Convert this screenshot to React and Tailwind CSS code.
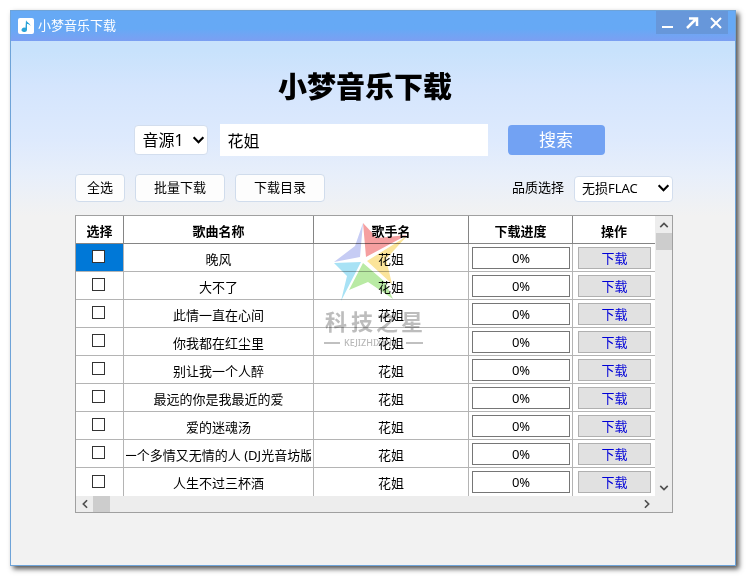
import React, { useState } from 'react';

const songs = [
  '晚风',
  '大不了',
  '此情一直在心间',
  '你我都在红尘里',
  '别让我一个人醉',
  '最远的你是我最近的爱',
  '爱的迷魂汤',
  '一个多情又无情的人 (DJ光音坊版',
  '人生不过三杯酒',
];

const Chevron = ({ className }) => (
  <svg viewBox="0 0 12 12" className={className} fill="none" stroke="currentColor" strokeWidth="2">
    <path d="M1.5 3.5 6 8l4.5-4.5" />
  </svg>
);

const Select = ({ id, label, options, className, selectClass }) => (
  <div className={`relative ${className}`}>
    <select
      id={id}
      aria-label={label}
      className={`h-full w-full appearance-none rounded-sm border border-[#d3deee] bg-white pr-5 text-black ${selectClass}`}
    >
      {options.map((option) => (
        <option key={option}>{option}</option>
      ))}
    </select>
    <Chevron className="pointer-events-none absolute right-[3px] top-1/2 size-[13px] -translate-y-1/2" />
  </div>
);

const ToolButton = ({ children, className }) => (
  <button className={`h-7 rounded-sm border border-[#d0dcec] bg-[#fdfdfd] text-[13px] ${className}`}>
    {children}
  </button>
);

const Watermark = () => (
  <svg
    viewBox="0 0 100 130"
    aria-hidden="true"
    className="pointer-events-none absolute left-[248px] top-1 h-[130px] w-[100px] mix-blend-multiply"
  >
    <path d="M39 3 53 18 83 15 42 37Z" fill="#f59fa0" />
    <path d="M39 3 36 37 10 42 31 26Z" fill="#c6ccf4" />
    <path d="M83 16 62 39 68 64 43 41Z" fill="#fbe49a" />
    <path d="M10 43 37 42 17 81 23 56Z" fill="#a8e2f5" />
    <path d="M39 43 61 62 69 79 44 62 25 70Z" fill="#b9eaa4" />
    <text x="1 27 52 77" y="110" fontSize="22" fontWeight="700" fill="#bdbdbd">
      科技之星
    </text>
    <path d="M0 123h16M82 123h17" stroke="#c0c0c0" strokeWidth="2" />
    <text x="20" y="126" fontSize="9" fontWeight="500" fill="#b8b8b8">
      KEJIZHIXING
    </text>
  </svg>
);

const SongTable = () => {
  const [checked, setChecked] = useState([]);

  const toggle = (song) => {
    setChecked(checked.includes(song) ? checked.filter((s) => s !== song) : [...checked, song]);
  };

  return (
    <div className="mt-[13px] border border-[#a0a0a0] bg-[#ededed]">
      <div className="flex">
        <div className="relative min-w-0 flex-1 bg-white">
          <table className="w-full table-fixed border-separate border-spacing-0 text-center text-[13px] leading-5">
            <colgroup>
              <col className="w-12" />
              <col className="w-[190px]" />
              <col className="w-[155px]" />
              <col className="w-[104px]" />
              <col />
            </colgroup>
            <thead>
              <tr className="h-7">
                {['选择', '歌曲名称', '歌手名', '下载进度', '操作'].map((title) => (
                  <th key={title} className="border-b border-r border-[#858585] p-0 pt-0.5 font-bold last:border-r-0">
                    {title}
                  </th>
                ))}
              </tr>
            </thead>
            <tbody>
              {songs.map((song, i) => (
                <tr key={song} className="group h-7">
                  <td className={`border-b border-r border-[#b4b4b4] p-0 pr-0.5 pb-0.5 group-last:border-b-0 ${i === 0 ? 'bg-[#0078d7]' : ''}`}>
                    <input
                      type="checkbox"
                      aria-label={song}
                      checked={checked.includes(song)}
                      onChange={() => toggle(song)}
                      className="mx-auto block size-[13px] appearance-none border border-[#333] bg-white checked:bg-[#0078d7]"
                    />
                  </td>
                  <td className="border-b border-r border-[#b4b4b4] px-0.5 py-0 group-last:border-b-0">
                    <div className="flex justify-center overflow-hidden whitespace-nowrap pt-0.5">{song}</div>
                  </td>
                  <td className="border-b border-r border-[#b4b4b4] p-0 pt-0.5 group-last:border-b-0">花姐</td>
                  <td className="border-b border-r border-[#b4b4b4] py-0 pl-[3px] pr-0.5 group-last:border-b-0">
                    <div role="progressbar" aria-valuenow={0} aria-label={song} className="h-[22px] border border-[#767676]">
                      0%
                    </div>
                  </td>
                  <td className="border-b border-[#b4b4b4] py-0 pl-[5px] pr-1 group-last:border-b-0">
                    <button className="block h-[22px] w-full border border-[#b0b0b0] bg-[#e1e1e1] text-[#0000d8]">下载</button>
                  </td>
                </tr>
              ))}
            </tbody>
          </table>
          <Watermark />
        </div>

        {/* Vertical scrollbar */}
        <div className="flex w-[17px] flex-col items-center text-[#505050]">
          <button aria-label="向上滚动" className="flex h-[17px] w-full items-center justify-center">
            <Chevron className="size-[10px] rotate-180" />
          </button>
          <div className="h-[17px] w-4 bg-[#cdcdcd]" />
          <button aria-label="向下滚动" className="mt-auto flex h-[17px] w-full items-center justify-center">
            <Chevron className="size-[10px]" />
          </button>
        </div>
      </div>

      {/* Horizontal scrollbar */}
      <div className="flex h-4 items-center pr-[17px] text-[#505050]">
        <button aria-label="向左滚动" className="flex w-[17px] items-center justify-center">
          <Chevron className="size-[10px] rotate-90" />
        </button>
        <div className="h-4 w-[17px] bg-[#cdcdcd]" />
        <button aria-label="向右滚动" className="ml-auto flex w-[17px] items-center justify-center">
          <Chevron className="size-[10px] -rotate-90" />
        </button>
      </div>
    </div>
  );
};

export default function App() {
  const [keyword, setKeyword] = useState('花姐');

  return (
    <div className="flex min-h-screen bg-white p-[10px] pr-[11px] font-['Noto_Sans','Noto_Sans_CJK_SC',sans-serif] text-black">
      <div className="flex flex-1 flex-col border border-[#6ea3d8] bg-[#f2f2f2] bg-[linear-gradient(180deg,#c6e2fc_0px,#c8e2fc_40px,#d4e5fd_75px,#deeafd_130px,#e8effa_165px,#f2f2f2_205px)] shadow-[3px_3px_5px_#555]">
        <header className="flex h-[30px] items-start justify-between bg-linear-to-b from-[#66a9f5] from-60% to-[#7b9ff2]">
          <div className="flex h-[29px] items-center gap-1 pl-[7px] text-[13px] text-white">
            <svg viewBox="0 0 16 16" className="size-4">
              <rect width="16" height="16" rx="2" fill="#fff" />
              <path d="M8 2c.5 2.500 4 2.500 4.500 6-1-1.500-2-2-3.500-2v6a2.700 2.200 0 1 1-1.500-2.200Z" fill="#2ba3d8" />
            </svg>
            小梦音乐下载
          </div>
          <div className="mr-[7px] flex h-[23px] w-[72px] items-center justify-around bg-[#6797da] text-white">
            <button aria-label="最小化">
              <svg viewBox="0 0 14 14" className="size-[14px]" stroke="currentColor" strokeWidth="2">
                <path d="M1 11h11" />
              </svg>
            </button>
            <button aria-label="最大化">
              <svg viewBox="0 0 14 14" className="size-[14px]" fill="none" stroke="currentColor" strokeWidth="2.5">
                <path d="M2 12 11 3M4 2.5h8V10" />
              </svg>
            </button>
            <button aria-label="关闭">
              <svg viewBox="0 0 14 14" className="size-[14px]" fill="none" stroke="currentColor" strokeWidth="2">
                <path d="m2 2 10 10M12 2 2 12" />
              </svg>
            </button>
          </div>
        </header>

        <main className="flex flex-col pl-16 pr-[62px]">
          <h1 className="mt-6 pr-[18px] text-center text-[29px] font-extrabold leading-[44px]">小梦音乐下载</h1>

          <form className="mt-[15px] flex items-center justify-center pr-[10px]" onSubmit={(e) => e.preventDefault()}>
            <Select label="音源" options={['音源1', '音源2']} className="mr-3 h-[30px] w-[74px]" selectClass="pl-2 text-base" />
            <input
              aria-label="搜索歌曲"
              value={keyword}
              onChange={(e) => setKeyword(e.target.value)}
              className="mr-5 h-8 w-[268px] bg-white px-2 text-base"
            />
            <button className="h-[30px] w-[97px] rounded-sm bg-[#72a2f3] text-[17px] text-white">搜索</button>
          </form>

          <div className="mt-[18px] flex items-center gap-[10px]">
            <ToolButton className="w-[50px]">全选</ToolButton>
            <ToolButton className="w-[90px]">批量下载</ToolButton>
            <ToolButton className="w-[90px]">下载目录</ToolButton>
            <label htmlFor="quality" className="ml-auto text-[13px]">品质选择</label>
            <Select id="quality" options={['无损FLAC', '高品MP3']} className="h-[26px] w-[99px]" selectClass="pl-[7px] text-[13px]" />
          </div>

          <SongTable />
        </main>
      </div>
    </div>
  );
}
